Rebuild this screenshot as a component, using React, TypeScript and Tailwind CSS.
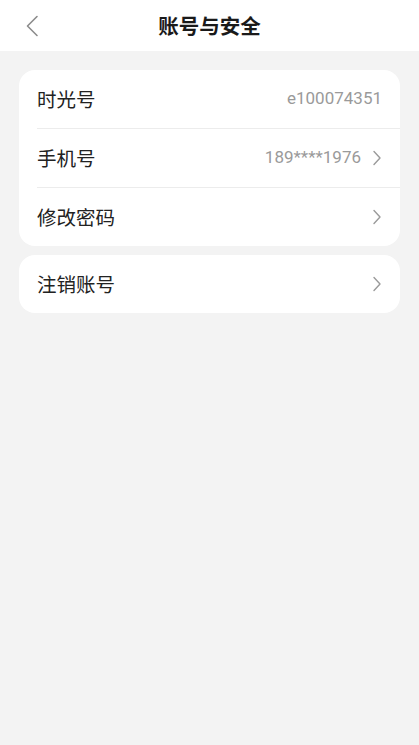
const font = { fontFamily: '"Noto Sans CJK SC", "Noto Sans", sans-serif' };

function Chevron() {
  return (
    <svg width="10" height="16" viewBox="0 0 10 16" fill="none" className="ml-[11px]">
      <path d="M2 1.5 L8 8 L2 14.5" stroke="#9a9a9a" strokeWidth="1.4" strokeLinecap="round" strokeLinejoin="round" />
    </svg>
  );
}

function Row({ label, value, arrow, divider }: { label: string; value?: string; arrow?: boolean; divider?: boolean }) {
  return (
    <div className="pl-[18px]">
      <div className={`flex items-center h-[58px] box-content pr-[18px] ${divider ? "border-b border-[#ececec]" : ""}`}>
        <span className="text-[19.5px] text-[#222] flex-1">{label}</span>
        {value && (
          <span className="text-[17px] text-[#9a9a9a]" style={{ fontFamily: "Roboto, sans-serif" }}>
            {value}
          </span>
        )}
        {arrow && <Chevron />}
      </div>
    </div>
  );
}

export default function App() {
  return (
    <div className="min-h-[745px] bg-[#f3f3f3]" style={font}>
      <div className="h-[51px] bg-white flex items-center justify-center relative">
        <svg width="14" height="22" viewBox="0 0 14 22" fill="none" className="absolute left-[25px] top-[15px]">
          <path d="M12 1.5 L2.5 11 L12 20.5" stroke="#8c8c8c" strokeWidth="1.6" strokeLinecap="round" strokeLinejoin="round" />
        </svg>
        <h1 className="text-[20.5px] font-bold text-[#1a1a1a]">账号与安全</h1>
      </div>
      <div className="px-[19px] pt-[19px] flex flex-col gap-[9px]">
        <div className="bg-white rounded-[16px] overflow-hidden">
          <Row label="时光号" value="e100074351" divider />
          <Row label="手机号" value="189****1976" arrow divider />
          <Row label="修改密码" arrow />
        </div>
        <div className="bg-white rounded-[16px] overflow-hidden">
          <Row label="注销账号" arrow />
        </div>
      </div>
    </div>
  );
}
